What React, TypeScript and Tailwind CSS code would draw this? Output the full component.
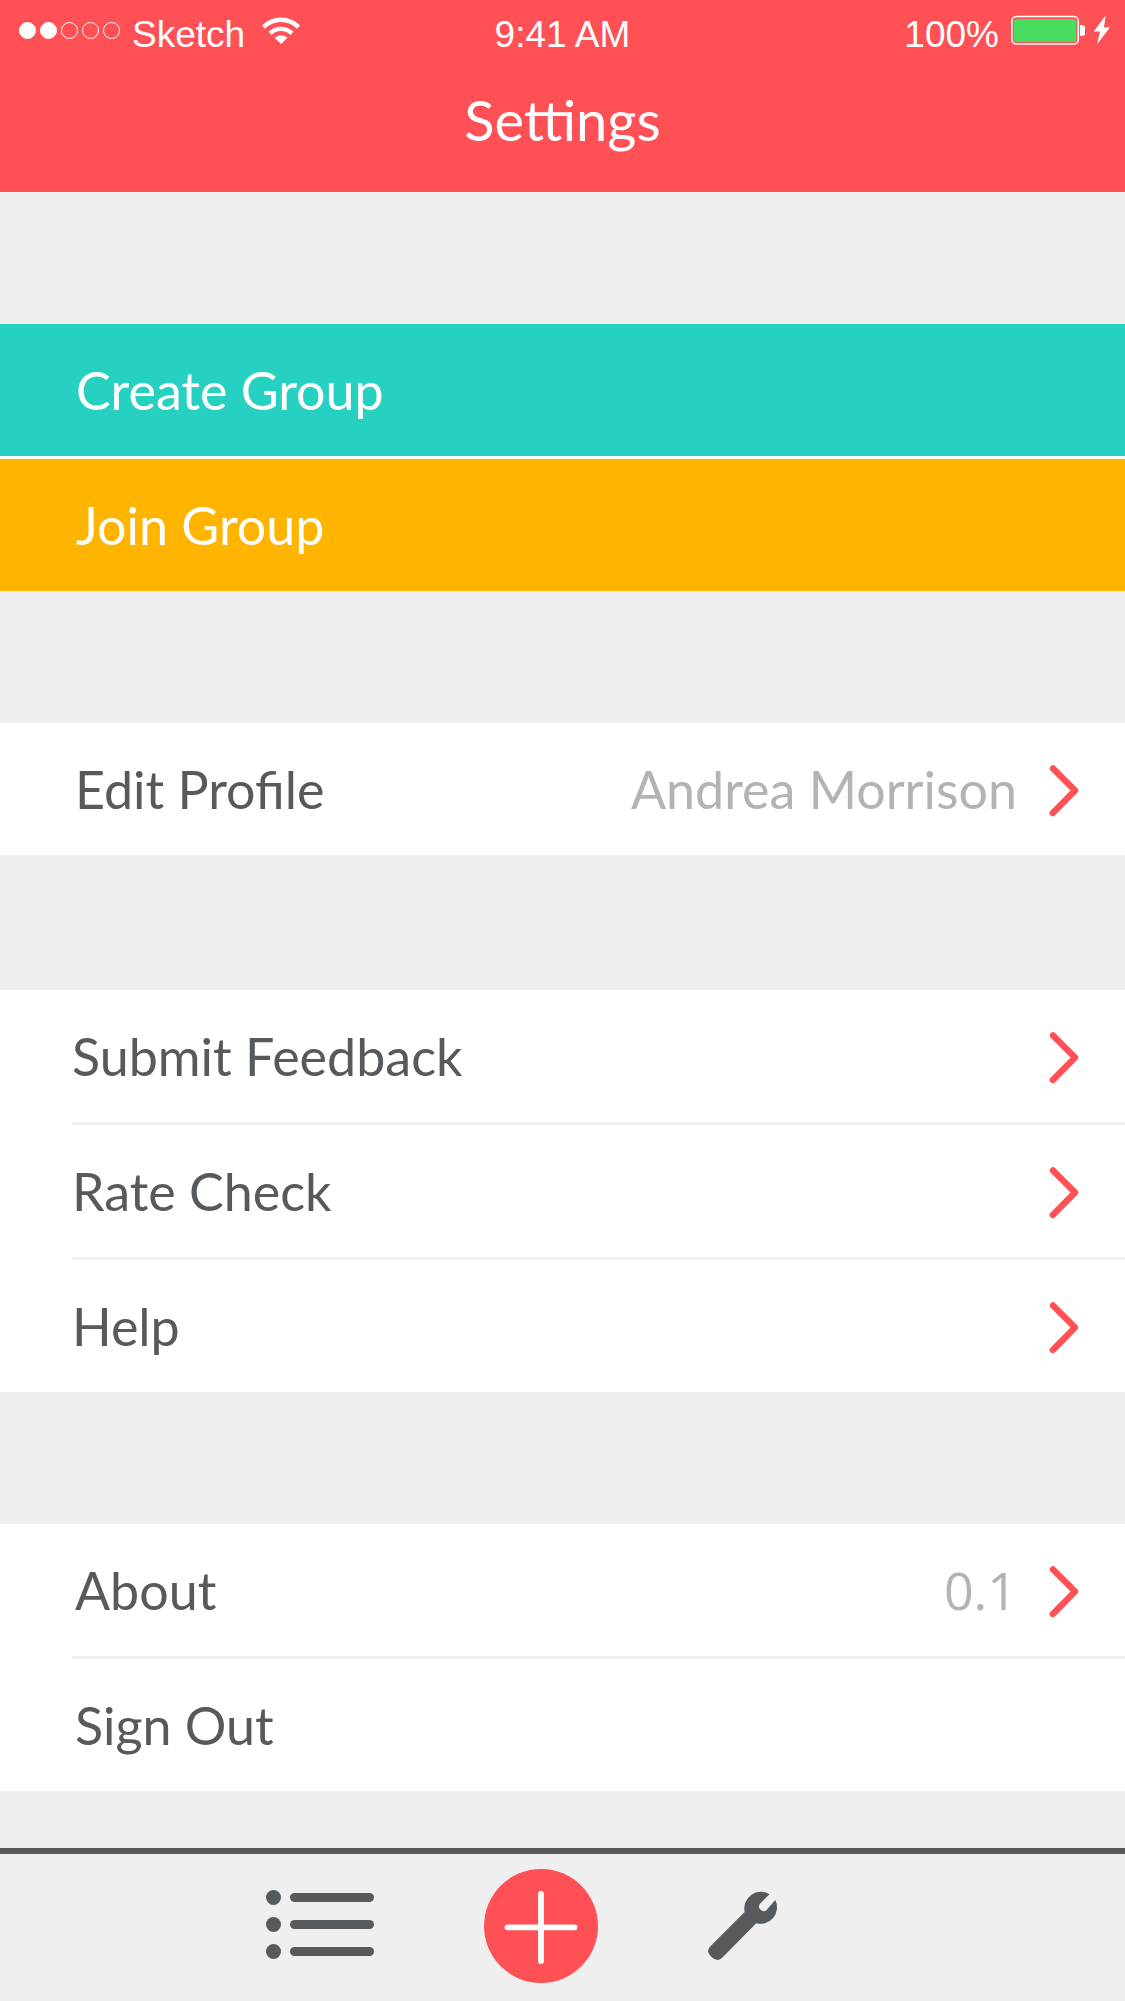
import type { ReactNode } from "react";

function SignalDots() {
  return (
    <span className="flex gap-1" role="img" aria-label="Signal: 2 of 5">
      {[true, true, false, false, false].map((on, i) => (
        <span
          key={i}
          className={
            on
              ? "size-[17px] rounded-full border border-white bg-white"
              : "size-[17px] rounded-full border border-white"
          }
        />
      ))}
    </span>
  );
}

function WifiIcon() {
  return (
    <svg className="ml-1 h-7 w-10" viewBox="0 0 40 28" fill="none" aria-hidden="true">
      <path d="M2.5 11.1A24.4 24.4 0 0 1 37.5 11.1" stroke="#fff" strokeWidth="4.4" />
      <path d="M9 17.4A15.6 15.6 0 0 1 31 17.4" stroke="#fff" strokeWidth="4.4" />
      <path d="M20 28L13.6 21.8A9.2 9.2 0 0 1 26.4 21.8Z" fill="#fff" />
    </svg>
  );
}

function BatteryIcon() {
  return (
    <svg className="h-[30px] w-[100px]" viewBox="0 0 100 30" aria-hidden="true">
      <rect x="0.9" y="1.4" width="66.4" height="27.6" rx="4.5" fill="none" stroke="#fff" strokeWidth="1.5" />
      <rect x="2.9" y="3.9" width="62.4" height="23" rx="2.5" fill="#48dc60" />
      <path d="M69 10H71.5A2.5 2.5 0 0 1 74 12.5V18.2A2.5 2.5 0 0 1 71.5 20.7H69Z" fill="#fff" />
      <path d="M94.7 0.3L82.7 16.6H89L86 29.3L99 12.3H93Z" fill="#fff" />
    </svg>
  );
}

function Chevron() {
  return (
    <svg className="mt-1 h-[52px] w-[30px] shrink-0" viewBox="0 0 30 52" fill="none" aria-hidden="true">
      <path d="M4 3.5L26 25.5L3.8 48" stroke="#ff5056" strokeWidth="6.4" strokeLinecap="round" strokeLinejoin="round" />
    </svg>
  );
}

function Row({
  label,
  value,
  chevron = true,
  inset = false,
}: {
  label: string;
  value?: ReactNode;
  chevron?: boolean;
  inset?: boolean;
}) {
  return (
    <li>
      <button
        type="button"
        className={
          inset
            ? "flex h-[132px] w-full items-center pr-[46px] pl-[3px] text-left"
            : "flex h-[132px] w-full items-center pr-[46px] text-left"
        }
      >
        <span className="flex-1 text-[#565a5c]">{label}</span>
        {value && <span className="mr-8 text-[#b3b3b3]">{value}</span>}
        {chevron && <Chevron />}
      </button>
    </li>
  );
}

function Section({ children }: { children: ReactNode }) {
  return <ul className="divide-y-3 divide-[#efefef] bg-white pl-[72px]">{children}</ul>;
}

export default function App() {
  return (
    <div className="flex min-h-screen flex-col bg-[#efefef] font-[Lato,sans-serif] text-[52px] leading-[64px]">
      <header className="h-48 bg-[#ff5056] text-white">
        <div className="grid h-[60px] grid-cols-3 items-center px-[14px] font-['Liberation_Sans',Arial,sans-serif] text-[37px] leading-none">
          <div className="flex items-center gap-3 pl-[5px]">
            <SignalDots />
            <span className="pt-2">Sketch</span>
            <WifiIcon />
          </div>
          <span className="pt-2 text-center">9:41 AM</span>
          <div className="flex items-center justify-end gap-3">
            <span className="pt-2">100%</span>
            <BatteryIcon />
          </div>
        </div>
        <h1 className="pt-7 text-center text-[56px]">Settings</h1>
      </header>

      <main className="flex-1 pb-[57px]">
        <div className="mt-[132px] flex flex-col gap-[3px] bg-white text-white">
          <button type="button" className="flex h-[132px] items-center bg-[#26d1c1] pl-[76px]">
            Create Group
          </button>
          <button type="button" className="flex h-[132px] items-center bg-[#ffb400] pl-[76px]">
            Join Group
          </button>
        </div>

        <div className="mt-[132px]">
          <Section>
            <Row inset label="Edit Profile" value="Andrea Morrison" />
          </Section>
        </div>

        <div className="mt-[135px]">
          <Section>
            <Row label="Submit Feedback" />
            <Row label="Rate Check" />
            <Row label="Help" />
          </Section>
        </div>

        <div className="mt-[132px]">
          <Section>
            <Row inset label="About" value={<span className="font-['Open_Sans',sans-serif]">0.1</span>} />
            <Row inset label="Sign Out" chevron={false} />
          </Section>
        </div>
      </main>

      <nav className="flex h-[153px] items-center justify-center gap-[110px] border-t-6 border-[#565a5c] pr-[81px] pb-[3px]">
        <button type="button" aria-label="Lists">
          <svg className="block h-[72px] w-[108px]" viewBox="0 0 108 72" fill="#565a5c" aria-hidden="true">
            <circle cx="7.5" cy="7.5" r="7.5" />
            <circle cx="7.5" cy="34.5" r="7.5" />
            <circle cx="7.5" cy="61.5" r="7.5" />
            <rect x="24" y="3" width="84" height="9" rx="4.5" />
            <rect x="24" y="30" width="84" height="9" rx="4.5" />
            <rect x="24" y="57" width="84" height="9" rx="4.5" />
          </svg>
        </button>
        <button type="button" aria-label="Add">
          <svg className="block size-[114px]" viewBox="0 0 114 114" aria-hidden="true">
            <circle cx="57" cy="57" r="57" fill="#ff5056" />
            <path d="M57 25V92M23.5 58.3H90.5" stroke="#fff" strokeWidth="5.8" strokeLinecap="round" />
          </svg>
        </button>
        <button type="button" aria-label="Settings">
          <svg className="block size-[70px]" viewBox="0 0 70 70" fill="#565a5c" aria-hidden="true">
            <path d="M61.5 3.3L52 12.7A4.6 4.6 0 0 0 58.6 19L67.3 9A16.5 16.5 0 0 1 48.3 32.3L14.7 66.3Q9.5 71.5 3.8 66.2Q-3 60 2.7 55L36.7 21A16.5 16.5 0 0 1 61.5 3.3Z" />
          </svg>
        </button>
      </nav>
    </div>
  );
}
